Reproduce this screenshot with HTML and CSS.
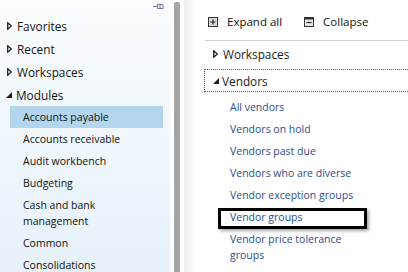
FILE: index.html
```html
<!DOCTYPE html>
<html lang="en">
<head>
  <meta charset="UTF-8" />
  <title>Navigation pane</title>
  <link rel="stylesheet" href="styles.css">
</head>
<body>

  <!-- Left navigation pane -->
  <nav class="nav-pane">
    <div class="pin-row">
      <svg class="pin" width="11" height="7" viewBox="0 0 11 7">
        <path d="M0 3.5h4.5M4.5 1v5M4.5 1.5h5.5v4h-5.5M7 1.5v4" fill="none" stroke="#7b70a8" stroke-width="1"/>
      </svg>
    </div>
    <div class="nav-head"><svg class="arrow" width="5" height="8" viewBox="0 0 5 8"><path d="M0.7 0.8L4.3 4L0.7 7.2Z" fill="#fff" stroke="#222" stroke-width="1.3"/></svg>Favorites</div>
    <div class="nav-head"><svg class="arrow" width="5" height="8" viewBox="0 0 5 8"><path d="M0.7 0.8L4.3 4L0.7 7.2Z" fill="#fff" stroke="#222" stroke-width="1.3"/></svg>Recent</div>
    <div class="nav-head"><svg class="arrow" width="5" height="8" viewBox="0 0 5 8"><path d="M0.7 0.8L4.3 4L0.7 7.2Z" fill="#fff" stroke="#222" stroke-width="1.3"/></svg>Workspaces</div>
    <div class="nav-head"><svg class="arrow open" width="6" height="6" viewBox="0 0 6 6"><path d="M6 0V6H0Z" fill="#222"/></svg>Modules</div>
    <ul class="module-list">
      <li class="selected">Accounts payable</li>
      <li>Accounts receivable</li>
      <li>Audit workbench</li>
      <li>Budgeting</li>
      <li>Cash and bank<br>management</li>
      <li>Common</li>
      <li>Consolidations</li>
    </ul>
  </nav>

  <div class="scroll-track"><div class="scroll-thumb"></div></div>

  <!-- Module content -->
  <main class="content">
    <div class="toolbar">
      <span class="tool">
        <svg width="10" height="10" viewBox="0 0 10 10">
          <rect x="0.5" y="0.5" width="9" height="9" fill="#d8d8d8" stroke="#333"/>
          <path d="M2.5 5h5M5 2.5v5" stroke="#222" stroke-width="1.2"/>
        </svg>
        Expand all
      </span>
      <span class="tool">
        <svg width="10" height="10" viewBox="0 0 10 10">
          <rect x="0.5" y="0.5" width="9" height="9" fill="#e6e6e6" stroke="#333"/>
          <rect x="0.5" y="0.5" width="9" height="2" fill="#333"/>
          <path d="M2.5 5.5h5" stroke="#222" stroke-width="1.2"/>
        </svg>
        Collapse
      </span>
    </div>

    <div class="tree-head"><svg class="arrow" width="5" height="8" viewBox="0 0 5 8"><path d="M0.7 0.8L4.3 4L0.7 7.2Z" fill="#fff" stroke="#222" stroke-width="1.3"/></svg>Workspaces</div>
    <div class="tree-head focused"><svg class="arrow open" width="6" height="6" viewBox="0 0 6 6"><path d="M6 0V6H0Z" fill="#222"/></svg>Vendors</div>

    <ul class="link-list">
      <li>All vendors</li>
      <li>Vendors on hold</li>
      <li>Vendors past due</li>
      <li>Vendors who are diverse</li>
      <li>Vendor exception groups</li>
      <li class="marked">Vendor groups<span class="callout"></span></li>
      <li>Vendor price tolerance<br>groups</li>
    </ul>
  </main>

</body>
</html>
```

FILE: styles.css
```css
body {
  margin: 0;
  width: 408px;
  height: 272px;
  overflow: hidden;
  display: flex;
  font-family: "Open Sans", "Noto Sans", sans-serif;
  color: #111;
  background: #fff;
}
ul {
  list-style: none;
  margin: 0;
  padding: 0;
}

/* nav pane */
.nav-pane {
  width: 170px;
  flex-shrink: 0;
  background: linear-gradient(to bottom, #fbfdff, #e6f1fa);
}
.pin-row {
  height: 14px;
  display: flex;
  justify-content: flex-end;
  align-items: flex-start;
  padding: 3px 6px 0 0;
  box-sizing: border-box;
}
.nav-head {
  height: 23px;
  display: flex;
  align-items: center;
  padding-left: 7px;
  font-size: 11.8px;
}
.arrow {
  flex-shrink: 0;
  margin-right: 5px;
}
.arrow.open {
  margin-right: 4px;
  margin-left: -1px;
  margin-top: 1px;
}
.module-list li {
  font-size: 10.5px;
  line-height: 16px;
  padding: 3px 0 3px 13px;
  margin-left: 10px;
  width: 140px;
}
.module-list li.selected {
  background: #b3d5ee;
}

/* scrollbar */
.scroll-track {
  width: 14px;
  flex-shrink: 0;
  padding: 2px 0 0 4px;
  box-sizing: border-box;
}
.scroll-thumb {
  width: 6px;
  height: 100%;
  background: #a5a5a5;
  border-radius: 2px 2px 0 0;
}

/* content */
.content {
  flex: 1;
  background: linear-gradient(to right, #ebebeb, #fff 12px);
}
.toolbar {
  height: 40px;
  margin-left: 21px;
  padding-left: 3px;
  border-bottom: 1px solid #cfcfcf;
  display: flex;
  align-items: center;
  gap: 22px;
  font-size: 11.5px;
}
.tool {
  display: flex;
  align-items: center;
  gap: 9px;
  padding-top: 3px;
}
.tree-head {
  height: 23px;
  display: flex;
  align-items: center;
  margin-left: 20px;
  padding-left: 8px;
  font-size: 11.8px;
  color: #1b1b1b;
  border: 1px dotted transparent;
}
.tree-head.focused {
  margin-top: 3px;
  height: 21px;
  border-color: #1a6ec8;
  border-right: none;
}
.tree-head .arrow.open {
  margin-left: 0;
  margin-right: 3px;
}
.link-list {
  margin-top: 4px;
}
.link-list li {
  font-size: 10.5px;
  line-height: 16px;
  padding: 3px 0 3px 46px;
  color: #2c4d8e;
}
.link-list li.marked {
  position: relative;
}
.callout {
  position: absolute;
  left: 34px;
  top: 2px;
  width: 143px;
  height: 15px;
  border: 3px solid #000;
  box-shadow: 2px 2px 3px rgba(0, 0, 0, 0.35);
}
```
